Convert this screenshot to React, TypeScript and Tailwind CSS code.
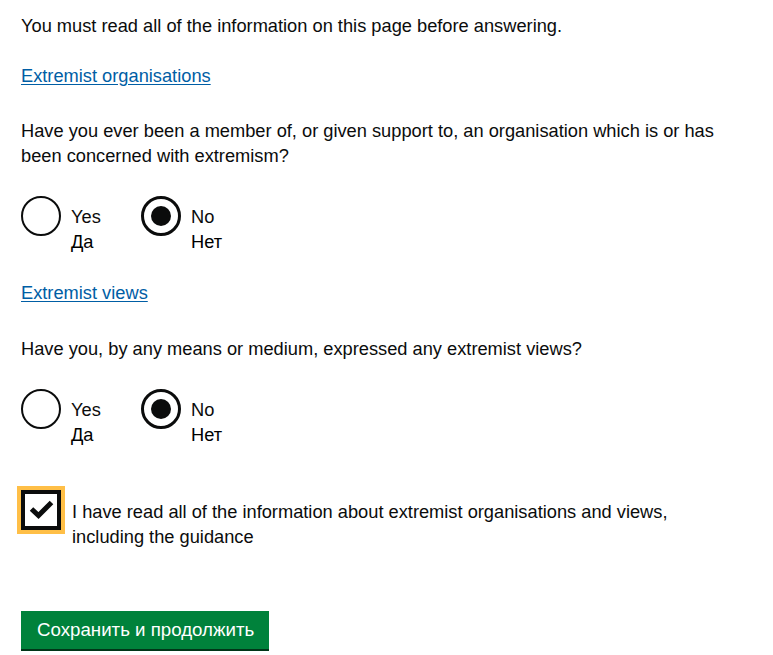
const font = "font-['Liberation_Sans',Arial,sans-serif]";

function Radio({ en, ru, checked, first }: { en: string; ru: string; checked?: boolean; first?: boolean }) {
  return (
    <div className={`flex items-start ${first ? "w-[120px]" : ""}`}>
      <div
        className={`flex h-10 w-10 shrink-0 items-center justify-center rounded-full bg-white ${
          checked ? "border-[3px]" : "border-2"
        } border-[#0b0c0c]`}
      >
        {checked && <div className="h-5 w-5 rounded-full bg-[#0b0c0c]" />}
      </div>
      <div className="pl-[10px] pt-2 text-[18.25px] leading-[25px]">
        <div className="text-[#0b0c0c]">{en}</div>
        <div className="text-black">{ru}</div>
      </div>
    </div>
  );
}

export default function App() {
  return (
    <main className={`min-h-screen w-full bg-white px-[21px] pt-[13px] text-[#0b0c0c] ${font}`}>
      <p className="text-[18.25px] leading-[25px]">
        You must read all of the information on this page before answering.
      </p>

      <a href="#" className="mt-[25px] block w-fit text-[18.25px] leading-[25px] text-[#005ea5] underline underline-offset-2">
        Extremist organisations
      </a>

      <p className="mt-[30px] max-w-[700px] text-[18.25px] leading-[25px]">
        Have you ever been a member of, or given support to, an organisation which is or has been concerned with extremism?
      </p>

      <div className="mt-[28px] flex">
        <Radio en="Yes" ru="Да" first />
        <Radio en="No" ru="Нет" checked />
      </div>

      <a href="#" className="mt-[26px] block w-fit text-[18.25px] leading-[25px] text-[#005ea5] underline underline-offset-2">
        Extremist views
      </a>

      <p className="mt-[31px] text-[18.25px] leading-[25px]">
        Have you, by any means or medium, expressed any extremist views?
      </p>

      <div className="mt-[28px] flex">
        <Radio en="Yes" ru="Да" first />
        <Radio en="No" ru="Нет" checked />
      </div>

      <div className="mt-[43px] flex items-start">
        <div className="relative h-10 w-10 shrink-0 border-4 border-[#0b0c0c] bg-white shadow-[0_0_0_4px_#ffbf47]">
          <svg className="absolute -left-1 -top-1 h-10 w-10" viewBox="0 0 40 40">
            <polyline points="10.5,19 17.5,25.5 30.5,12.5" fill="none" stroke="#0b0c0c" strokeWidth="5" />
          </svg>
        </div>
        <div className="max-w-[620px] pl-[11px] pt-[9px] text-[18.25px] leading-[25px]">
          I have read all of the information about extremist organisations and views, including the guidance
        </div>
      </div>

      <button className="mt-[62px] block h-[38px] w-[248px] whitespace-nowrap bg-[#00823b] pl-4 text-left text-[18.7px] leading-[38px] text-white shadow-[0_2px_0_#003618]">
        Сохранить и продолжить
      </button>
    </main>
  );
}
